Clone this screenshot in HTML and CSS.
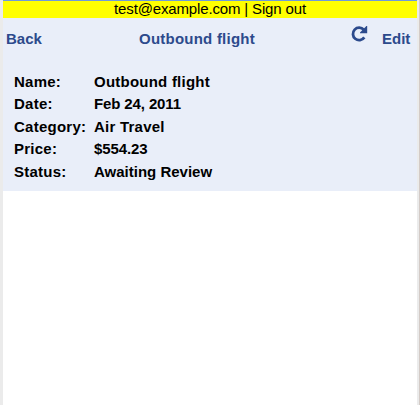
FILE: index.html
```html
<!DOCTYPE html>
<html lang="en">
<head>
<meta charset="utf-8">
<title>Outbound flight</title>
<link rel="stylesheet" href="styles.css">
</head>
<body>
<div class="window">
  <div class="account"><span class="account-text">test@example.com | Sign out</span></div>
  <div class="panel">
    <div class="header">
      <span class="back"><span>Back</span></span>
      <span class="title wide"><span>Outbound flight</span></span>
      <svg class="refresh" width="18" height="18" viewBox="0 0 18 18"><path d="M14.3 12.4A6.2 6.2 0 1 1 13.8 4.8" fill="none" stroke="#2c4a8c" stroke-width="2.8"/><path d="M17.2 1v7.2H10V7.4L16.4 1z" fill="#2c4a8c"/></svg>
      <span class="edit"><span>Edit</span></span>
    </div>
    <dl class="details">
      <dt><span>Name:</span></dt><dd class="wide"><span>Outbound flight</span></dd>
      <dt><span>Date:</span></dt><dd class="tight"><span>Feb 24, 2011</span></dd>
      <dt><span>Category:</span></dt><dd class="wide"><span>Air Travel</span></dd>
      <dt><span>Price:</span></dt><dd class="tight"><span>$554.23</span></dd>
      <dt><span>Status:</span></dt><dd><span>Awaiting Review</span></dd>
    </dl>
  </div>
</div>
</body>
</html>
```
FILE: styles.css
```css
body {
  margin: 0;
  background: #fff;
  font-family: "Liberation Sans", Arial, sans-serif;
  font-size: 15px;
  color: #000;
}
.window {
  box-sizing: border-box;
  height: 405px;
  border-left: 3px solid #ebebeb;
  border-right: 1px solid #d3cbc7;
  box-shadow: inset -2px 0 #ebebeb;
  padding-right: 2px;
}
.account {
  height: 17px;
  border-top: 1px solid #6f9bd8;
  background: #ff0;
  text-align: center;
  line-height: 16px;
  letter-spacing: -0.15px;
}
.panel {
  height: 173px;
  background: #e9eef9;
  font-weight: bold;
}
.header {
  display: grid;
  grid-template-columns: 136px 211px 32px 1fr;
  height: 42px;
  line-height: 42px;
  color: #2c4a8c;
}
.back {
  padding-left: 3px;
}
.refresh {
  margin-top: 7px;
}
.details {
  display: grid;
  grid-template-columns: 80px 1fr;
  grid-template-rows: 22px 23px 22px 23px 22px;
  margin: 0;
  padding: 11px 0 0 11px;
  line-height: 22px;
}
.details dt {
  letter-spacing: 0.25px;
}
.details dd {
  margin: 0;
}
.wide,
.details .wide {
  letter-spacing: 0.23px;
}
.details .tight {
  letter-spacing: -0.12px;
}
```
